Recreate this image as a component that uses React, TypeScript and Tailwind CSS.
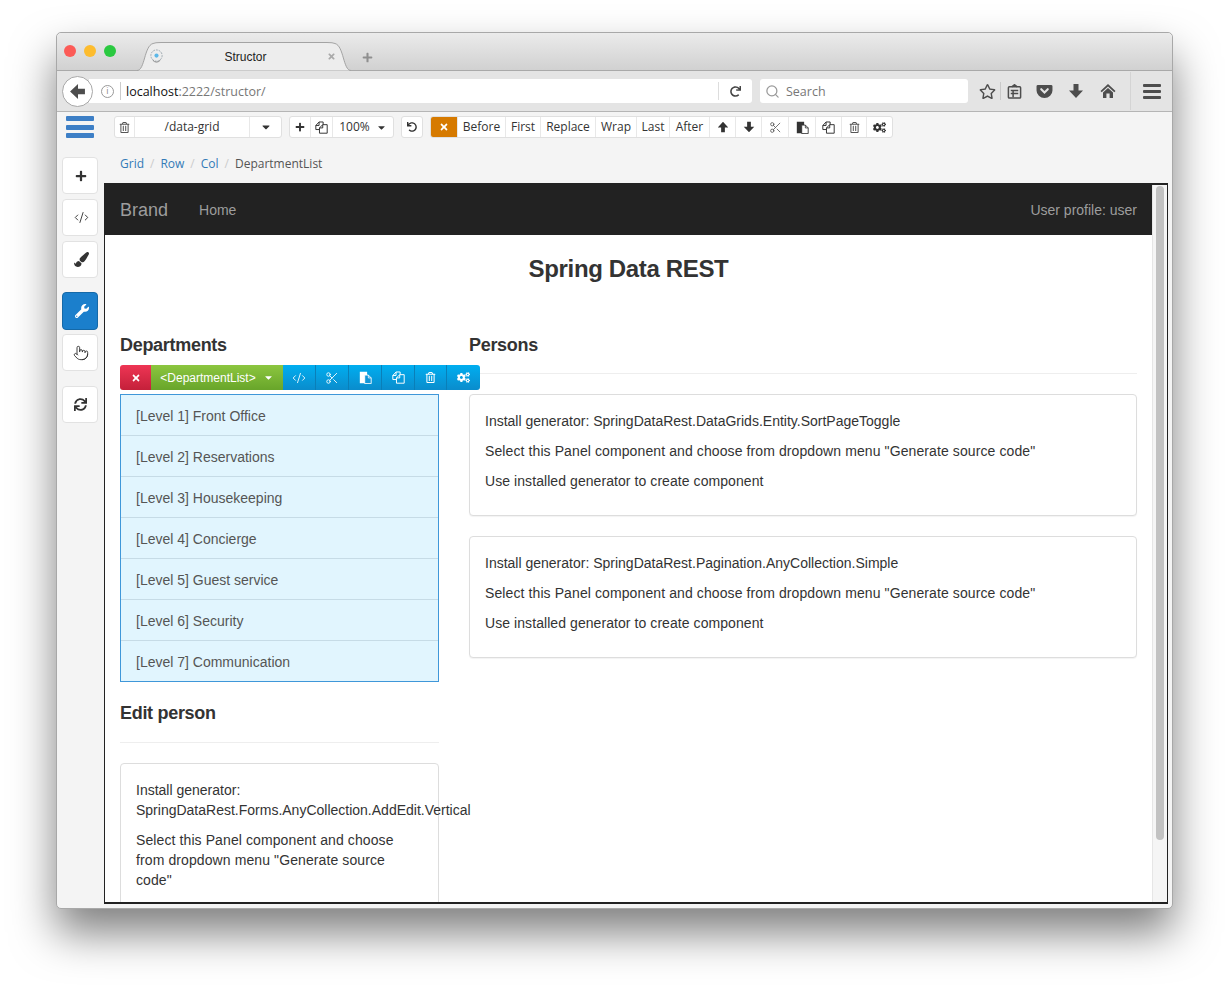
import {
  FaCaretDown,
  FaCogs,
  FaPaintBrush,
  FaPlus,
  FaRedo,
  FaRegStar,
  FaRegTrashAlt,
  FaSync,
  FaTimes,
  FaUndo,
  FaWrench,
} from "react-icons/fa";
import { CodeXml, Pointer, Scissors, Search } from "lucide-react";

const sans = "font-['Liberation_Sans',Arial,sans-serif]";
const open = "font-['Open_Sans',sans-serif]";

function Favicon() {
  return (
    <svg viewBox="0 0 16 16" className="size-[15px]">
      <circle cx="8" cy="7" r="6" fill="none" stroke="#9aa5ad" strokeWidth="1" strokeDasharray="2 1" />
      <circle cx="8" cy="7" r="2.2" fill="#5cb8e8" />
      <path d="M4 12 Q8 16 12 12" fill="none" stroke="#888" strokeWidth="1" />
    </svg>
  );
}

function Clipboard() {
  return (
    <svg viewBox="0 0 16 16" className="size-[15px]" fill="none" stroke="#4d4d4d" strokeWidth="1.6">
      <rect x="1.5" y="3" width="13" height="12" rx="1" />
      <path d="M5 3 L8 0.8 L11 3" fill="#4d4d4d" />
      <path d="M4 7 H12 M4 10 H12 M6.5 6 V14" />
    </svg>
  );
}

function Pocket() {
  return (
    <svg viewBox="0 0 18 16" className="h-[15px] w-[17px]">
      <path d="M2 1 H16 A1.5 1.5 0 0 1 17.5 2.5 V7 A8.5 8 0 0 1 0.5 7 V2.5 A1.5 1.5 0 0 1 2 1 Z" fill="#4d4d4d" />
      <path d="M5.5 5.5 L9 9 L12.5 5.5" fill="none" stroke="#e4e4e4" strokeWidth="2.2" strokeLinecap="round" />
    </svg>
  );
}

// heavy arrow, points down unless rotated with a class
function FatArrow({ className }: { className?: string }) {
  return (
    <svg viewBox="0 0 16 16" className={className} fill="currentColor">
      <path d="M5.5 1 H10.5 V7.5 H15 L8 15 L1 7.5 H5.5 Z" />
    </svg>
  );
}

function HomeIcon() {
  return (
    <svg viewBox="0 0 16 16" className="size-[16px]" fill="#4d4d4d">
      <path d="M8 1 L15.5 8 L14.3 9.2 L8 3.4 L1.7 9.2 L0.5 8 Z" />
      <path d="M8 5 L13 9.6 V15 H9.6 V10.5 H6.4 V15 H3 V9.6 Z" />
    </svg>
  );
}

function CopyIcon({ className }: { className?: string }) {
  return (
    <svg viewBox="0 0 16 16" className={className} fill="none" stroke="currentColor" strokeWidth="1.2" strokeLinejoin="round">
      <path d="M5.5 10.5 H1 V5.5 L5 1.2 H10 V4.5" />
      <path d="M5 1.2 V5.5 H1" />
      <path d="M5.5 8.5 L9.5 4.5 H15 V15 H5.5 Z" />
      <path d="M9.5 4.5 V8.5 H5.5" />
    </svg>
  );
}

function PasteIcon({ className, sheet }: { className?: string; sheet: string }) {
  return (
    <svg viewBox="0 0 16 16" className={className}>
      <path d="M1 1 H10 V15 H1 Z" fill="currentColor" />
      <path d="M7 5 H11.5 L15 8.5 V15.5 H7 Z" fill={sheet} stroke="currentColor" strokeWidth="1.1" />
      <path d="M11.5 5 V8.5 H15" fill="none" stroke="currentColor" strokeWidth="1" />
    </svg>
  );
}

function ToolGroup({ children }: { children: React.ReactNode }) {
  return (
    <div className="flex h-[22px] rounded-[3px] border border-[#e0e0e0] bg-white text-[#333] divide-x divide-[#e8e8e8] overflow-hidden">
      {children}
    </div>
  );
}

function Cell({ w, children }: { w: string; children: React.ReactNode }) {
  return <div className={`flex items-center justify-center shrink-0 ${w}`}>{children}</div>;
}

function SideButton({ children, active, className }: { children: React.ReactNode; active?: boolean; className?: string }) {
  return (
    <div
      className={`flex items-center justify-center w-9 rounded-[4px] border ${
        active ? "h-[38px] bg-[#1b7fcc] border-[#1569a8] text-white" : "h-[37px] bg-white border-[#e2e2e2] text-[#333]"
      } ${className ?? ""}`}
    >
      {children}
    </div>
  );
}

function GeneratorPanel({ name }: { name: string }) {
  return (
    <div className="h-[122px] rounded-[4px] border border-[#ddd] bg-white px-[15px] pt-4 shadow-[0_1px_1px_rgba(0,0,0,0.05)]">
      <p className="mb-2.5">Install generator: {name}</p>
      <p className="mb-2.5 tracking-[0.1px]">Select this Panel component and choose from dropdown menu "Generate source code"</p>
      <p className="tracking-[0.07px]">Use installed generator to create component</p>
    </div>
  );
}

const departments = [
  "[Level 1] Front Office",
  "[Level 2] Reservations",
  "[Level 3] Housekeeping",
  "[Level 4] Concierge",
  "[Level 5] Guest service",
  "[Level 6] Security",
  "[Level 7] Communication",
];

export default function App() {
  return (
    <div className="h-[989px] w-[1229px] overflow-hidden bg-white pt-8 pl-14">
      <div className="flex h-[877px] w-[1117px] flex-col rounded-[5px] border border-[#a8a8a8] bg-[#f4f4f4] shadow-[0_24px_44px_rgba(0,0,0,0.5)]">
        {/* tab strip */}
        <div className="flex h-[38px] shrink-0 items-end rounded-t-[5px] border-b border-[#a9a9a9] bg-gradient-to-b from-[#ebebeb] to-[#d1d1d1] pl-[7px]">
          <div className="mb-[13px] flex gap-2">
            <span className="size-3 rounded-full bg-[#fc5b57]" />
            <span className="size-3 rounded-full bg-[#fdbc2e]" />
            <span className="size-3 rounded-full bg-[#2ac940]" />
          </div>
          <div className="relative ml-[21px] -mb-px flex h-[29px] w-[214px] items-center pl-[12px] pr-[15px]">
            <svg viewBox="0 0 214 29" className="absolute inset-0 h-full w-full" preserveAspectRatio="none">
              <path
                d="M0 28.5 C8 28.5 7 4 16 1.5 Q18 0.5 24 0.5 H190 Q196 0.5 198 1.5 C207 4 206 28.5 214 28.5"
                fill="#ededed"
                stroke="#a3a3a3"
              />
            </svg>
            <span className="relative">
              <Favicon />
            </span>
            <span className={`relative flex-1 text-center text-[12px] text-[#222] ${sans}`}>Structor</span>
            <FaTimes className="relative size-[9px] text-[#aaa]" />
            <FaPlus className="absolute -right-[22px] top-[10px] size-[11px] text-[#8f8f8f]" />
          </div>
        </div>

        {/* url bar */}
        <div className="flex h-[41px] shrink-0 items-center border-b border-[#b5b5b5] bg-[#e4e4e4]">
          <div className="relative z-10 ml-[5px] flex size-[31px] items-center justify-center rounded-full border border-[#a8a8a8] bg-white">
            <FatArrow className="size-[17px] rotate-90 text-[#4d4d4d]" />
          </div>
          <div className={`-ml-1 flex h-6 w-[663px] items-center rounded-r-[3px] bg-white pl-[12px] text-[12.5px] ${open}`}>
            <span className="flex size-[13px] items-center justify-center rounded-full border border-[#999] text-[9px] text-[#888]">i</span>
            <span className="ml-[6px] mr-[5px] h-[18px] w-px bg-[#ccc]" />
            <span className="pt-[2px] text-[#111]">localhost</span>
            <span className="pt-[2px] text-[#777]">:2222/structor/</span>
            <span className="ml-auto h-[18px] w-px bg-[#ddd]" />
            <FaRedo className="mx-[11px] size-[11px] text-[#444]" />
          </div>
          <div className={`ml-2 flex h-6 w-[208px] items-center gap-[6px] rounded-[3px] bg-white pl-[5px] text-[12.5px] text-[#777] ${open}`}>
            <Search className="size-[15px] text-[#999]" strokeWidth={2} />
            <span className="pt-[2px]">Search</span>
          </div>
          <FaRegStar className="ml-[11px] size-[17px] text-[#4d4d4d]" />
          <span className="ml-1 h-[18px] w-px bg-[#c9c9c9]" />
          <span className="ml-1.5">
            <Clipboard />
          </span>
          <span className="ml-[14px]">
            <Pocket />
          </span>
          <FatArrow className="ml-[15px] size-[16px] text-[#4d4d4d]" />
          <span className="ml-[16px]">
            <HomeIcon />
          </span>
          <span className="ml-[14px] h-[38px] w-px bg-[#d4d4d4]" />
          <div className="ml-[12px] flex h-[15px] w-[18px] flex-col justify-between">
            <span className="h-[3px] rounded-[1px] bg-[#4d4d4d]" />
            <span className="h-[3px] rounded-[1px] bg-[#4d4d4d]" />
            <span className="h-[3px] rounded-[1px] bg-[#4d4d4d]" />
          </div>
        </div>

        {/* page */}
        <div className="flex min-h-0 flex-1">
          <div className="flex w-[46px] shrink-0 flex-col items-center">
            <div className="mt-1 flex h-[22px] w-7 flex-col justify-between">
              <span className="h-[5px] rounded-[1px] bg-[#3d7fc6]" />
              <span className="h-[5px] rounded-[1px] bg-[#3d7fc6]" />
              <span className="h-[5px] rounded-[1px] bg-[#3d7fc6]" />
            </div>
            <SideButton className="mt-[19px]">
              <FaPlus className="ml-px size-[12px]" />
            </SideButton>
            <SideButton className="mt-[5px]">
              <CodeXml className="ml-[3px] size-[15px]" strokeWidth={1.5} />
            </SideButton>
            <SideButton className="mt-[5px]">
              <FaPaintBrush className="ml-[2px] size-[15px]" />
            </SideButton>
            <SideButton active className="mt-[14px]">
              <FaWrench className="ml-[3px] size-[14px]" />
            </SideButton>
            <SideButton className="mt-1">
              <Pointer className="ml-px size-[16px]" strokeWidth={1.4} />
            </SideButton>
            <SideButton className="mt-[15px]">
              <FaSync className="ml-px size-[13px]" />
            </SideButton>
          </div>

          <div className="flex min-w-0 flex-1 flex-col">
            {/* structor toolbar */}
            <div className={`mt-1 flex items-center gap-[7px] pl-[11px] text-[12px] ${open}`}>
              <ToolGroup>
                <Cell w="w-5">
                  <FaRegTrashAlt className="size-[11px] text-[#555]" />
                </Cell>
                <Cell w="w-[115px]">/data-grid</Cell>
                <Cell w="w-[31px]">
                  <FaCaretDown className="size-[12px]" />
                </Cell>
              </ToolGroup>
              <ToolGroup>
                <Cell w="w-[21px]">
                  <FaPlus className="size-[10px]" />
                </Cell>
                <Cell w="w-[22px]">
                  <CopyIcon className="size-[13px]" />
                </Cell>
                <Cell w="w-[60px] gap-[6px]">
                  100%
                  <FaCaretDown className="size-[11px]" />
                </Cell>
              </ToolGroup>
              <ToolGroup>
                <Cell w="w-[20px]">
                  <FaUndo className="size-[10px]" />
                </Cell>
              </ToolGroup>
              <ToolGroup>
                <Cell w="w-[27px] bg-[#d67a00] text-white">
                  <FaTimes className="size-[10px]" />
                </Cell>
                <Cell w="w-[48px]">Before</Cell>
                <Cell w="w-[35px]">First</Cell>
                <Cell w="w-[55px]">Replace</Cell>
                <Cell w="w-[41px]">Wrap</Cell>
                <Cell w="w-[33px]">Last</Cell>
                <Cell w="w-[40px]">After</Cell>
                <Cell w="w-[26px]">
                  <FatArrow className="size-[12px] rotate-180" />
                </Cell>
                <Cell w="w-[26px]">
                  <FatArrow className="size-[12px]" />
                </Cell>
                <Cell w="w-[27px]">
                  <Scissors className="size-[13px] text-[#555]" strokeWidth={1.5} />
                </Cell>
                <Cell w="w-[27px]">
                  <PasteIcon className="size-[13px]" sheet="#fff" />
                </Cell>
                <Cell w="w-[26px]">
                  <CopyIcon className="size-[13px]" />
                </Cell>
                <Cell w="w-[25px]">
                  <FaRegTrashAlt className="size-[11px] text-[#555]" />
                </Cell>
                <Cell w="w-[25px]">
                  <FaCogs className="size-[13px]" />
                </Cell>
              </ToolGroup>
            </div>

            {/* breadcrumb */}
            <div className={`mt-[17px] flex h-[18px] items-center pl-[17px] text-[12px] text-[#ccc] ${open}`}>
              <span className="text-[#337ab7]">Grid</span>
              <span className="mx-[6px]">/</span>
              <span className="text-[#337ab7]">Row</span>
              <span className="mx-[6px]">/</span>
              <span className="text-[#337ab7]">Col</span>
              <span className="mx-[6px]">/</span>
              <span className="text-[#555]">DepartmentList</span>
            </div>

            {/* page frame */}
            <div className={`ml-px mt-[10px] mb-1 mr-[4px] flex min-h-0 flex-1 overflow-hidden border-x border-y-2 border-[#222] bg-white text-[14px] leading-5 text-[#333] ${sans}`}>
              <div className="min-w-0 flex-1">
                <div className="flex h-[50px] items-center bg-[#222] px-[15px] text-[#9d9d9d]">
                  <span className="text-[18px]">Brand</span>
                  <span className="ml-[31px]">Home</span>
                  <span className="ml-auto">User profile: user</span>
                </div>
                <h1 className="mt-[21px] text-center text-[24px] font-bold leading-[26px] tracking-[-0.35px]">Spring Data REST</h1>
                <div className="mt-[53px] flex gap-[30px] px-[15px]">
                  <div className="w-[319px] shrink-0">
                    <div className="relative">
                      <h4 className="border-b border-[#eee] pb-[18px] text-[18px] font-bold leading-5 tracking-[-0.3px]">Departments</h4>
                      <div className="absolute left-0 top-[30px] flex h-[25px] w-[360px] overflow-hidden rounded-[3px] text-white">
                        <div className="flex w-[31px] items-center justify-center bg-gradient-to-b from-[#ee3554] to-[#c4203a]">
                          <FaTimes className="size-[10px]" />
                        </div>
                        <div className="flex w-[132px] items-center justify-center gap-[7px] bg-gradient-to-b from-[#8cc63f] to-[#68a52a] text-[12px]">
                          {"<DepartmentList>"}
                          <FaCaretDown className="size-[11px]" />
                        </div>
                        <div className="flex flex-1 divide-x divide-[#0a7fb8] bg-gradient-to-b from-[#00aef0] to-[#0a8ccc]">
                          <Cell w="w-[33px]"><CodeXml className="size-[14px]" strokeWidth={1.5} /></Cell>
                          <Cell w="w-[33px]"><Scissors className="size-[14px]" strokeWidth={1.5} /></Cell>
                          <Cell w="w-[33px]"><PasteIcon className="size-[13px]" sheet="#1296d8" /></Cell>
                          <Cell w="w-[33px]"><CopyIcon className="size-[13px]" /></Cell>
                          <Cell w="w-[32px]"><FaRegTrashAlt className="size-[11px]" /></Cell>
                          <Cell w="w-[33px]"><FaCogs className="size-[13px]" /></Cell>
                        </div>
                      </div>
                    </div>
                    <ul className="mt-5 divide-y divide-[#c6dbe6] border border-[#3f97d9] bg-[#e1f5fe] text-[#555]">
                      {departments.map((name) => (
                        <li key={name} className="flex h-[41px] items-center pl-[15px] pt-[2px] last:h-[40px]">
                          {name}
                        </li>
                      ))}
                    </ul>
                    <h4 className="mt-[21px] border-b border-[#eee] pb-[19px] text-[18px] font-bold leading-5 tracking-[-0.3px]">Edit person</h4>
                    <div className="mt-5 h-[200px] rounded-[4px] border border-[#ddd] px-[15px] pt-4">
                      <p className="mb-2.5">
                        Install generator:
                        <br />
                        SpringDataRest.Forms.AnyCollection.AddEdit.Vertical
                      </p>
                      <p className="tracking-[0.1px]">Select this Panel component and choose from dropdown menu "Generate source code"</p>
                    </div>
                  </div>
                  <div className="min-w-0 flex-1">
                    <h4 className="border-b border-[#eee] pb-[18px] text-[18px] font-bold leading-5 tracking-[-0.3px]">Persons</h4>
                    <div className="mt-5 flex flex-col gap-5">
                      <GeneratorPanel name="SpringDataRest.DataGrids.Entity.SortPageToggle" />
                      <GeneratorPanel name="SpringDataRest.Pagination.AnyCollection.Simple" />
                    </div>
                  </div>
                </div>
              </div>
              {/* scrollbar */}
              <div className="w-[15px] shrink-0 border-l border-[#e6e6e6] bg-[#f5f5f5] px-[3px] pt-[1px]">
                <div className="h-[654px] rounded-full bg-[#c2c2c2]" />
              </div>
            </div>
          </div>
        </div>
      </div>
    </div>
  );
}
